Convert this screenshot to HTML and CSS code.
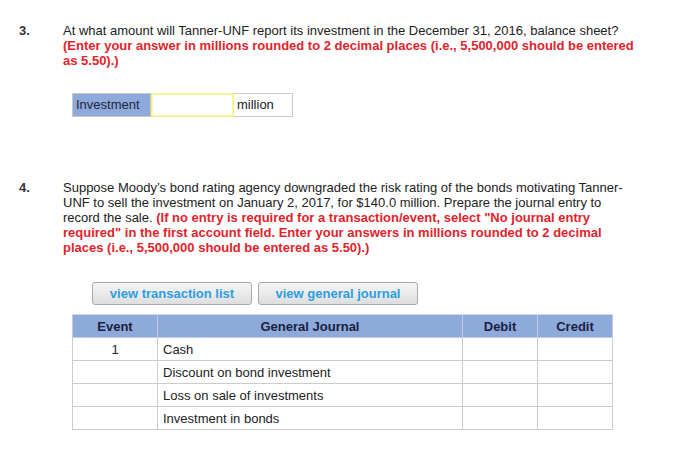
FILE: index.html
```html
<!DOCTYPE html>
<html>
<head>
<meta charset="utf-8">
<link rel="stylesheet" href="styles.css">
</head>
<body>
<div class="page">
  <div class="question q3">
    <div class="num">3.</div>
    <div class="body">
      <p class="text">At what amount will Tanner-UNF report its investment in the December 31, 2016, balance sheet? <span class="note">(Enter your answer in millions rounded to 2 decimal places (i.e., 5,500,000 should be entered as 5.50).)</span></p>
    </div>
  </div>
  <div class="answer">
    <div class="label">Investment</div>
    <div class="input"></div>
    <div class="unit">million</div>
  </div>

  <div class="question q4">
    <div class="num">4.</div>
    <div class="body">
      <p class="text">Suppose Moody’s bond rating agency downgraded the risk rating of the bonds motivating Tanner-UNF to sell the investment on January 2, 2017, for $140.0 million. Prepare the journal entry to record the sale. <span class="note">(If no entry is required for a transaction/event, select "No journal entry required" in the first account field. Enter your answers in millions rounded to 2 decimal places (i.e., 5,500,000 should be entered as 5.50).)</span></p>
    </div>
  </div>

  <div class="buttons">
    <div class="btn">view transaction list</div>
    <div class="btn">view general journal</div>
  </div>

  <table class="journal">
    <thead>
      <tr><th class="c-event">Event</th><th class="c-acct">General Journal</th><th class="c-amt">Debit</th><th class="c-amt">Credit</th></tr>
    </thead>
    <tbody>
      <tr><td class="c-event">1</td><td class="c-acct">Cash</td><td></td><td></td></tr>
      <tr><td class="c-event"></td><td class="c-acct">Discount on bond investment</td><td></td><td></td></tr>
      <tr><td class="c-event"></td><td class="c-acct">Loss on sale of investments</td><td></td><td></td></tr>
      <tr><td class="c-event"></td><td class="c-acct">Investment in bonds</td><td></td><td></td></tr>
    </tbody>
  </table>
</div>
</body>
</html>
```

FILE: styles.css
```css
html, body {
  margin: 0;
  padding: 0;
  background: #ffffff;
}
.page {
  font-family: "Liberation Sans", Arial, sans-serif;
  font-size: 13px;
  color: #222222;
  padding: 23px 0 0 0;
}
.question {
  display: flex;
}
.num {
  width: 44px;
  padding-left: 19px;
  box-sizing: content-box;
  flex: none;
  font-weight: bold;
  line-height: 15px;
  color: #333333;
}
.body {
  width: 574px;
}
.text {
  margin: 0;
  line-height: 15px;
}
.note {
  color: #e2232b;
  font-weight: bold;
}
.answer {
  display: flex;
  margin: 25px 0 0 72px;
  height: 24px;
}
.label {
  width: 79px;
  background: #8eaadb;
  border: 1px solid #c9c9c9;
  box-sizing: border-box;
  padding-left: 3px;
  line-height: 22px;
  color: #1e2440;
}
.input {
  width: 83px;
  border: 1px solid #f5f07a;
  box-shadow: inset 0 0 0 1px #fbf7b0;
  box-sizing: border-box;
}
.unit {
  width: 59px;
  border: 1px solid #c9c9c9;
  border-left: none;
  box-sizing: border-box;
  padding-left: 3px;
  line-height: 22px;
  color: #222222;
}
.q4 {
  margin-top: 63px;
}
.buttons {
  display: flex;
  gap: 6px;
  margin: 27px 0 0 92px;
}
.btn {
  width: 160px;
  height: 23px;
  box-sizing: border-box;
  border: 1px solid #a9a9a9;
  border-radius: 3px;
  background: linear-gradient(#f6f6f6, #dedede);
  color: #2d9ee2;
  font-weight: bold;
  text-align: center;
  line-height: 21px;
  font-size: 13px;
}
.journal {
  margin: 9px 0 0 72px;
  width: 541px;
  border-collapse: collapse;
  table-layout: fixed;
}
.journal th, .journal td {
  border: 1px solid #cccccc;
  height: 23px;
  padding: 0 5px;
  box-sizing: border-box;
}
.journal th {
  background: #8eaadb;
  color: #1b2140;
  font-weight: bold;
  text-align: center;
  border-color: #c2cbe0;
  border-top-color: #cfd7e8;
}
.journal td {
  color: #222222;
}
.c-event { width: 85px; text-align: center; }
.c-acct { width: 305px; text-align: left; }
.journal th.c-acct { text-align: center; }
.c-amt { width: 75px; }
```
